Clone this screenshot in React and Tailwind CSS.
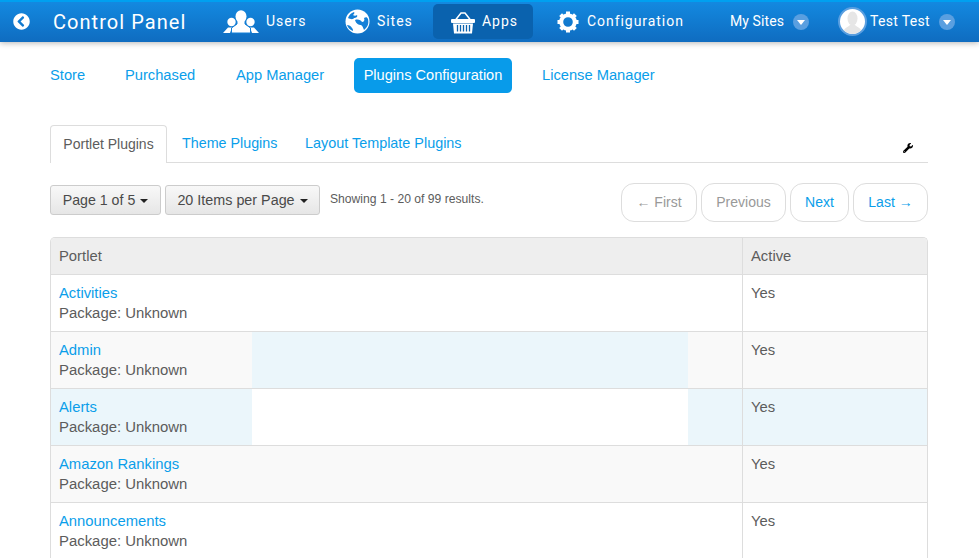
import React from "react";
import { FaChevronCircleLeft, FaWrench } from "react-icons/fa";

function UsersIcon() {
  return (
    <svg width="36" height="24" viewBox="0 0 36 24" fill="white">
      <circle cx="8.500" cy="12" r="4.200" />
      <path d="M0 23 L5 17.500 L9 17.500 L7 23 Z" />
      <circle cx="27.500" cy="12" r="4.200" />
      <path d="M36 23 L31 17.500 L27 17.500 L29 23 Z" />
      <path d="M14 10h8v4l5.500 4v5H8.500v-5l5.500-4z" stroke="#1480d8" strokeWidth="1" />
      <ellipse cx="18" cy="6.500" rx="5.500" ry="6.200" />
    </svg>
  );
}

function GlobeIcon() {
  return (
    <svg width="25" height="25" viewBox="0 0 25 25">
      <circle cx="12.500" cy="12.500" r="12" fill="white" />
      <path d="M3 9c1-3 3-5 6-6 1 1 0 2-1 3 1 1 3 1 4 0 1 2-1 3-3 3-1 2-4 1-6 0z" fill="#1480d8" />
      <path d="M10 11c3-1 6 0 7 2 2 0 3-2 2-4 2-1 3-1 4 1 1 4 0 8-4 11-1-2-1-4-3-5-2 0-5-1-6-5z" fill="#1480d8" />
      <path d="M2 16c2 0 4 1 5 3 1 1 1 2 1 3-3-1-5-3-6-6z" fill="#1480d8" />
    </svg>
  );
}

function BasketIcon() {
  return (
    <svg width="24" height="24" viewBox="0 0 24 24" fill="white">
      <path d="M4.500 10 L10 3 L14 3 L19.500 10" fill="none" stroke="white" strokeWidth="1.500" />
      <rect x="0" y="9" width="24" height="4" rx="1" />
      <path d="M2 13.500h20l-1 10H3z" />
      <path d="M6.500 15v6.500M9.500 15v6.500M12.500 15v6.500M15.500 15v6.500M18.500 15v6.500" stroke="#0a62ae" strokeWidth="1.300" />
    </svg>
  );
}

function GearIcon() {
  return (
    <svg width="22" height="22" viewBox="0 0 22 22">
      <circle cx="11" cy="11" r="6.800" fill="none" stroke="white" strokeWidth="4" />
      <path
        d="M11 0.500v4M11 17.500v4M0.500 11h4M17.500 11h4M3.600 3.600l2.800 2.800M15.600 15.600l2.800 2.800M3.600 18.400l2.800-2.800M15.600 6.400l2.800-2.800"
        stroke="white"
        strokeWidth="4"
      />
    </svg>
  );
}

function NavItem({ icon, label, active, cls }) {
  return (
    <div className={`flex h-[35px] items-center rounded-[5px] ${active ? "bg-[#0a62ae]" : ""} ${cls}`}>
      {icon}
      <span className="text-[14px] tracking-[0.95px] text-white">{label}</span>
    </div>
  );
}

function Caret() {
  return (
    <span className="flex h-4 w-4 items-center justify-center rounded-full bg-[#5a9fe0]">
      <span className="mt-[2px] h-0 w-0 border-x-[4.500px] border-t-[5px] border-x-transparent border-t-white" />
    </span>
  );
}

function DropCaret() {
  return <span className="ml-[5px] inline-block h-0 w-0 border-x-4 border-t-4 border-x-transparent border-t-[#222] align-middle" />;
}

function PageBtn({ children, off, cls }) {
  return (
    <div className={`flex h-[39px] items-center justify-center rounded-[13px] border border-[#ddd] bg-white text-[14px] ${off ? "text-[#999]" : "text-[#0a9eea]"} ${cls}`}>
      {children}
    </div>
  );
}

const rows = [
  { name: "Activities", bg: "bg-white", right: "bg-white" },
  { name: "Admin", bg: "bg-[linear-gradient(90deg,#f9f9f9_201px,#ebf6fb_201px,#ebf6fb_637px,#f9f9f9_637px)]", right: "bg-[#f9f9f9]" },
  { name: "Alerts", bg: "bg-[linear-gradient(90deg,#ebf6fb_201px,#ffffff_201px,#ffffff_637px,#ebf6fb_637px)]", right: "bg-[#ebf6fb]" },
  { name: "Amazon Rankings", bg: "bg-[#f9f9f9]", right: "bg-[#f9f9f9]" },
  { name: "Announcements", bg: "bg-white", right: "bg-white" },
];

export default function App() {
  return (
    <div className="h-[558px] w-[979px] overflow-hidden bg-white font-['Liberation_Sans',Arial,sans-serif] text-[14.8px] text-[#5c5c5c]">
      <header className="relative flex h-[42px] items-center border-t-2 border-[#00a0f0] bg-[linear-gradient(#1389e0,#0f6cc0)] pb-[1px] font-['Roboto',sans-serif] shadow-[0_1px_6px_rgba(0,0,0,0.3)]">
        <FaChevronCircleLeft className="ml-[13px] text-white" size={17} />
        <span className="ml-[23px] w-[170px] text-[20px] tracking-[1.050px] text-white">Control Panel</span>
        <NavItem icon={<UsersIcon />} label="Users" cls="w-[122px] gap-[7px]" />
        <NavItem icon={<GlobeIcon />} label="Sites" cls="w-[88px] gap-[7px]" />
        <NavItem active icon={<BasketIcon />} label="Apps" cls="w-[100px] gap-[7px] pl-[18px]" />
        <NavItem icon={<GearIcon />} label="Configuration" cls="ml-[24px] w-[173px] gap-[8px]" />
        <span className="text-[14px] tracking-[0.1px] text-white">My Sites</span>
        <span className="ml-[9px]"><Caret /></span>
        <div className="relative ml-[29px] flex h-[29px] w-[29px] items-center justify-center overflow-hidden rounded-full border-2 border-[#5a9fe0] bg-white">
          <svg width="25" height="25" viewBox="0 0 25 25" fill="#e6e6e6">
            <ellipse cx="12.500" cy="9.500" rx="5" ry="7" />
            <path d="M3 25c0-6 5-7 7-9h5c2 2 7 3 7 9z" />
          </svg>
        </div>
        <span className="ml-[3px] text-[14px] tracking-[0.3px] text-white">Test Test</span>
        <span className="ml-[9px]"><Caret /></span>
      </header>

      <div className="px-[50px]">
        <nav className="mt-[16px] flex h-[35px] items-center text-[14.7px] text-[#0a9eea]">
          <span className="w-[35px]">Store</span>
          <span className="ml-[40px] w-[71px] whitespace-nowrap">Purchased</span>
          <span className="ml-[40px] w-[89px] whitespace-nowrap">App Manager</span>
          <span className="ml-[29px] flex h-[35px] w-[158px] items-center justify-center rounded-[5px] bg-[#089bea] text-[14.6px] text-white">Plugins Configuration</span>
          <span className="ml-[30px]">License Manager</span>
        </nav>

        <div className="relative mt-[32px] flex h-[38px] w-[878px] items-end border-b border-[#ddd] text-[14.4px] text-[#0a9eea]">
          <div className="-mb-px flex h-[38px] w-[117px] items-center justify-center rounded-t-[4px] border border-b-0 border-[#ddd] bg-white text-[14px] text-[#5c5c5c]">Portlet Plugins</div>
          <div className="ml-[15px] flex h-[37px] w-[95px] items-center whitespace-nowrap text-[14.3px]">Theme Plugins</div>
          <div className="ml-[28px] flex h-[37px] items-center">Layout Template Plugins</div>
          <FaWrench className="absolute top-[18px] right-[15px] text-black" size={10} />
        </div>

        <div className="mt-[20px] flex h-[39px] w-[878px] items-start">
          <div className="mt-[2px] flex h-[30px] w-[111px] items-center justify-center rounded-[3px] border border-[#ccc] bg-[linear-gradient(#f8f8f8,#e6e6e6)] pt-[1px] text-[14.2px] text-[#4a4a4a]">
            Page 1 of 5<DropCaret />
          </div>
          <div className="mt-[2px] ml-[4px] flex h-[30px] w-[155px] items-center justify-center rounded-[3px] border border-[#ccc] bg-[linear-gradient(#f8f8f8,#e6e6e6)] pt-[1px] text-[14.35px] text-[#4a4a4a]">
            20 Items per Page<DropCaret />
          </div>
          <span className="mt-[7px] ml-[10px] text-[12.15px] text-[#5c5c5c]">Showing 1 - 20 of 99 results.</span>
          <div className="ml-auto flex gap-[4px]">
            <PageBtn off cls="w-[76px]">← First</PageBtn>
            <PageBtn off cls="w-[85px]">Previous</PageBtn>
            <PageBtn cls="w-[59px]">Next</PageBtn>
            <PageBtn cls="w-[75px]">Last →</PageBtn>
          </div>
        </div>

        <div className="mt-[15px] w-[878px] overflow-hidden rounded-t-[5px] border-x border-t border-[#ddd]">
          <div className="flex h-[37px] border-b border-[#ddd] bg-[#eee]">
            <div className="flex w-[691px] items-center pl-[8px]">Portlet</div>
            <div className="flex flex-1 items-center border-l border-[#ddd] pl-[8px]">Active</div>
          </div>
          {rows.map((r) => (
            <div key={r.name} className="flex h-[57px] border-b border-[#ddd]">
              <div className={`w-[691px] pt-[8px] pl-[8px] leading-[20px] ${r.bg}`}>
                <div className="text-[#0a9eea]">{r.name}</div>
                <div className="text-[14.9px]">Package: Unknown</div>
              </div>
              <div className={`flex-1 border-l border-[#ddd] pt-[8px] pl-[8px] leading-[20px] ${r.right}`}>Yes</div>
            </div>
          ))}
        </div>
      </div>
    </div>
  );
}
